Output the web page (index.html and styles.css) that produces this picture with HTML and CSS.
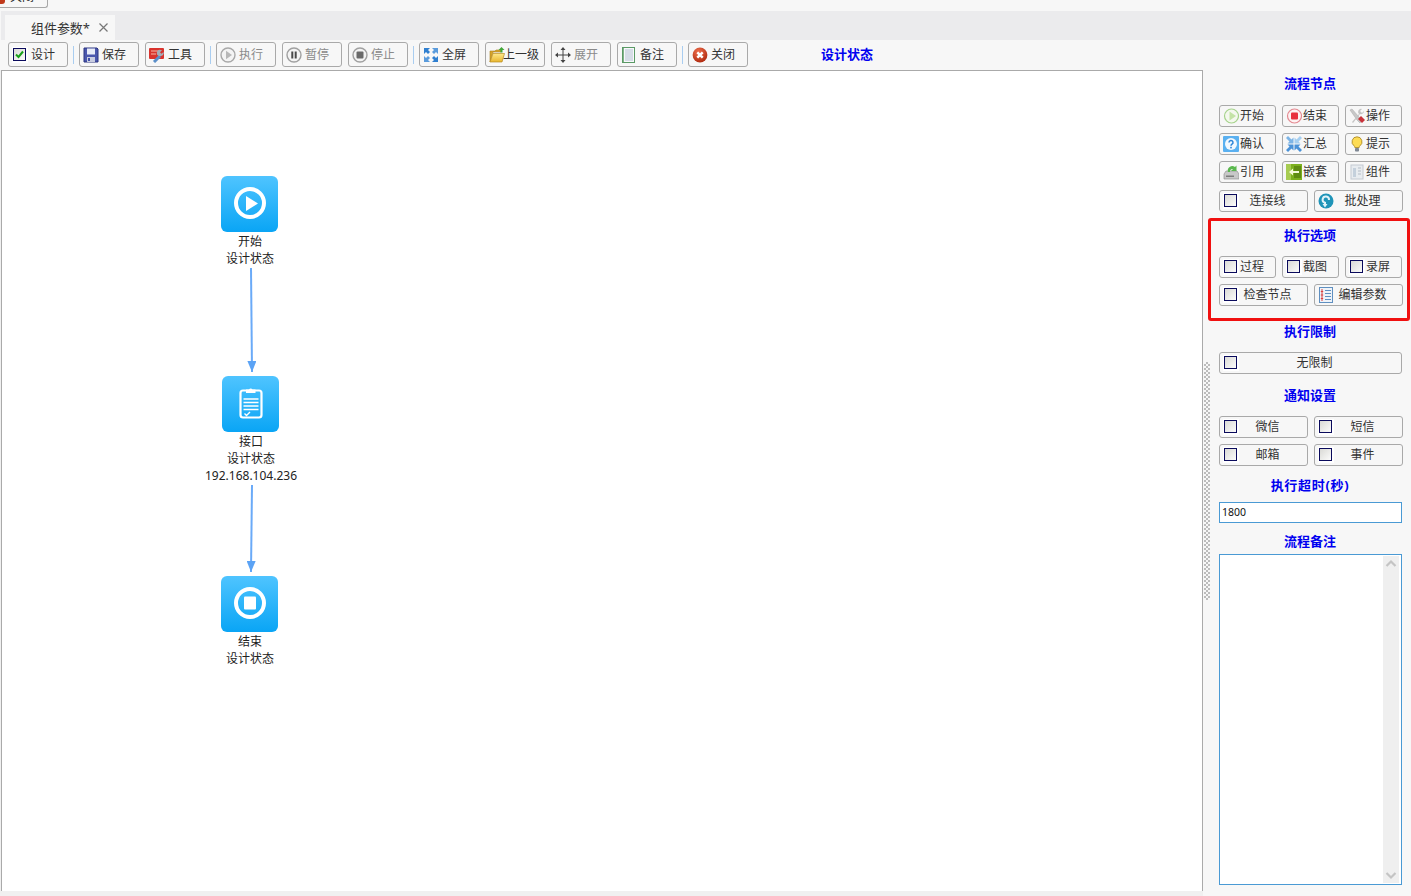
FILE: index.html
```html
<!DOCTYPE html>
<html lang="zh">
<head>
<meta charset="utf-8">
<title>组件参数</title>
<link rel="stylesheet" href="styles.css">
</head>
<body>
<svg class="sprite" aria-hidden="true">
  <defs>
    <linearGradient id="g-box" x1="0" y1="0" x2="1" y2="1"><stop offset="0" stop-color="#d8d8d4"/><stop offset="1" stop-color="#fdfdfd"/></linearGradient>
    <linearGradient id="g-folder" x1="0" y1="0" x2="0" y2="1"><stop offset="0" stop-color="#ffe98a"/><stop offset="1" stop-color="#e8b52e"/></linearGradient>
    <radialGradient id="g-red" cx=".4" cy=".3" r=".8"><stop offset="0" stop-color="#f0714f"/><stop offset="1" stop-color="#a82208"/></radialGradient>
  </defs>
  <symbol id="i-box" viewBox="0 0 16 16"><rect x="0" y="0" width="16" height="16" fill="#fff"/><rect x="1.500" y="1.500" width="12" height="12" fill="url(#g-box)" stroke="#0a0a5c"/></symbol>
  <symbol id="i-check" viewBox="0 0 16 16"><rect x="0" y="0" width="16" height="16" fill="#fff"/><rect x="1.500" y="1.500" width="12" height="12" fill="url(#g-box)" stroke="#0a0a5c"/><path d="M4 7.500l2.500 2.500L11 4.500" fill="none" stroke="#1aa01a" stroke-width="2"/></symbol>
  <symbol id="i-save" viewBox="0 0 16 16"><path d="M1 1h13l1 1v13H1z" fill="#4a57ad" stroke="#2b3480"/><rect x="4" y="1.500" width="8" height="6" fill="#e8ecf8"/><rect x="4" y="10" width="8" height="5" fill="#c9cde0"/><rect x="5" y="11" width="2" height="3" fill="#3f4fa8"/></symbol>
  <symbol id="i-tools" viewBox="0 0 16 16"><rect x="0" y="1" width="15" height="11" rx="1" fill="#d9332d"/><path d="M2 4h9M2 7h5" stroke="#f7b9a8" stroke-width="1.200"/><path d="M5 15l6-6" stroke="#5b8fc9" stroke-width="3"/><path d="M10 9a3 3 0 0 1 2-6l1 .3-2 2 1.500 1.500 2-1.800A3 3 0 0 1 11 9z" fill="#a4aeb8"/></symbol>
  <symbol id="i-play" viewBox="0 0 16 16"><circle cx="8" cy="8" r="7" fill="#f4f4f4" stroke="#a8a8a8" stroke-width="1.400"/><path d="M6 3.800l6 4.200-6 4.200z" fill="#b8b8b8"/></symbol>
  <symbol id="i-pause" viewBox="0 0 16 16"><circle cx="8" cy="8" r="7" fill="#f4f4f4" stroke="#a0a0a0" stroke-width="1.400"/><path d="M5.300 4.500h2v7h-2zM8.700 4.500h2v7h-2z" fill="#4a4a4a"/></symbol>
  <symbol id="i-stop" viewBox="0 0 16 16"><circle cx="8" cy="8" r="7" fill="#f4f4f4" stroke="#a0a0a0" stroke-width="1.400"/><rect x="4.500" y="4.500" width="7" height="7" rx="1" fill="#6a6a6a"/></symbol>
  <symbol id="i-full" viewBox="0 0 16 16"><g fill="#2f7fd0"><path d="M1 1h6L5 3l2 2-2 2-2-2-2 2z"/><path d="M15 1H9l2 2-2 2 2 2 2-2 2 2z" fill="#5a9bdc"/><path d="M1 15h6l-2-2 2-2-2-2-2 2-2-2z" fill="#5a9bdc"/><path d="M15 15H9l2-2-2-2 2-2 2 2 2-2z"/></g></symbol>
  <symbol id="i-folder" viewBox="0 0 16 16"><path d="M1 4h5l1-1h5v2H4L1 15z" fill="#d9a52a" stroke="#a87f1e" stroke-width=".6"/><path d="M4 6.500h11.500L13 15H1z" fill="url(#g-folder)" stroke="#b98d22" stroke-width=".7"/><path d="M12.500 0l3 3h-2v2.500h-2V3h-2z" fill="#43a83a"/></symbol>
  <symbol id="i-move" viewBox="0 0 16 16"><path d="M8 2v12M2 8h12" stroke="#444" stroke-width="1"/><path d="M8 0l2.500 3h-5zM8 16l2.500-3h-5zM0 8l3-2.500v5zM16 8l-3-2.500v5z" fill="#444"/></symbol>
  <symbol id="i-note" viewBox="0 0 16 16"><rect x="1.500" y=".5" width="12" height="15" fill="#f8f9fb" stroke="#5b9a66"/><path d="M2 1v14" stroke="#5b9a66" stroke-width="1.500"/><path d="M4 3h8M4 5h8M4 7h8M4 9h8M4 11h8M4 13h8" stroke="#b4c0d2"/></symbol>
  <symbol id="i-close" viewBox="0 0 16 16"><circle cx="8" cy="8" r="7.400" fill="url(#g-red)"/><path d="M5.300 5.300l5.400 5.400M10.700 5.300l-5.400 5.400" stroke="#fff" stroke-width="2.400"/></symbol>
  <symbol id="i-start" viewBox="0 0 16 16"><circle cx="8.500" cy="8" r="7" fill="#f4f8ee" stroke="#a6d38c" stroke-width="1.200"/><path d="M6.500 3.500l6.500 4.500-6.500 4.500z" fill="#c4e3a6"/></symbol>
  <symbol id="i-end" viewBox="0 0 16 16"><circle cx="8.500" cy="8" r="7" fill="#fdf2f2" stroke="#e48a92" stroke-width="1.200"/><rect x="5" y="4.500" width="7" height="7" rx="1" fill="#e8303c"/></symbol>
  <symbol id="i-op" viewBox="0 0 16 16"><path d="M1 2l2-1 7 8 3 3-2 3-3-3z" fill="#c8c8c8" stroke="#a8a8a8" stroke-width=".5"/><path d="M9 11l3-3 4 4-3 3z" fill="#c8323a"/><path d="M3 14l7-8a3 3 0 0 1 3-5l-2 2 2 2 2-2a3 3 0 0 1-4 3l-7 9z" fill="#c4c4c4"/></symbol>
  <symbol id="i-ask" viewBox="0 0 16 16"><rect x="0" y="0" width="16" height="16" rx="1" fill="#5ab0f0"/><circle cx="8" cy="8" r="6" fill="#f2f8fe"/><path d="M6 6.500a2 2 0 1 1 3 1.700c-.7.500-1 .8-1 1.500" fill="none" stroke="#2f86d8" stroke-width="1.500"/><rect x="7.200" y="10.800" width="1.600" height="1.600" fill="#2f86d8"/></symbol>
  <symbol id="i-sum" viewBox="0 0 16 16"><path d="M7.500 7.500H1.500l2-2L0 2l2-2 3.500 3.500 2-2z" fill="#7cb4e6"/><path d="M8.500 7.500h6l-2-2L16 2l-2-2-3.500 3.500-2-2z" fill="#a4cef0"/><path d="M7.500 8.500H1.500l2 2L0 14l2 2 3.500-3.500 2 2z" fill="#4a92d8"/><path d="M8.500 8.500h6l-2 2L16 14l-2 2-3.500-3.500-2 2z" fill="#4a92d8"/></symbol>
  <symbol id="i-bulb" viewBox="0 0 16 16"><path d="M8 .8a5 5 0 0 1 3 9c-.6.500-.8 1-.8 1.700H5.800c0-.7-.2-1.200-.8-1.700a5 5 0 0 1 3-9z" fill="#fddc55" stroke="#a58220" stroke-width=".8"/><rect x="6" y="12" width="4" height="3.500" rx=".8" fill="#7f8894"/></symbol>
  <symbol id="i-ref" viewBox="0 0 16 16"><path d="M1 10l2-3h11l2 3v5H1z" fill="#c8c8c8" stroke="#888" stroke-width=".6"/><rect x="3" y="11.500" width="8" height="1.500" fill="#7c7c7c"/><path d="M5 8a4.500 4.500 0 0 1 7-5l1.500-1.500V7H8l2-2a2.500 2.500 0 0 0-3 3z" fill="#5ab84e"/></symbol>
  <symbol id="i-nest" viewBox="0 0 16 16"><rect x="0" y="0" width="16" height="16" fill="#7cb01e"/><rect x="0" y="0" width="5" height="16" fill="#a7cc52"/><rect x="8" y="2" width="7" height="12" fill="#5f8c12"/><path d="M3 8l4-3.500V7h6v2H7v2.500z" fill="#f4f8d8"/></symbol>
  <symbol id="i-comp" viewBox="0 0 16 16"><rect x="2" y="1" width="12" height="14" fill="#e8ecf0" stroke="#c4cad2"/><path d="M4 4h3v9H4z" fill="#c4d0dc"/><path d="M9 4h3M9 7h3M9 10h3" stroke="#b4bcc6"/></symbol>
  <symbol id="i-batch" viewBox="0 0 16 16"><circle cx="8" cy="8" r="7.500" fill="#1f94b8"/><path d="M7 12.500V9.800A3.200 3.200 0 1 1 11 7" fill="none" stroke="#dff2f8" stroke-width="2"/><path d="M7 14.500l-2.500-3.500h5z" fill="#dff2f8"/></symbol>
  <symbol id="i-param" viewBox="0 0 16 16"><rect x="1.500" y=".5" width="13" height="15" fill="#eef3f9" stroke="#5f8fc0"/><path d="M7 3.500h6M7 6.500h6M7 9.500h6M7 12.500h6" stroke="#5f8fc0"/><path d="M4 2v12" stroke="#d84040"/><path d="M2.800 4.500h2.400M2.800 8h2.400M2.800 11.500h2.400" stroke="#d84040"/></symbol>
</svg>

<div class="top-strip">
  <div class="stub"><span class="stub-icon"></span><span class="stub-text">关闭</span></div>
</div>

<div class="tab-strip">
  <div class="tab"><span class="tab-title">组件参数*</span><svg class="tab-x" viewBox="0 0 9 9"><path d="M.5 .5l8 8M8.500 .5l-8 8" fill="none" stroke="#777" stroke-width="1.200"/></svg></div>
</div>

<div class="toolbar">
  <button class="tb"><svg class="ic"><use href="#i-check"/></svg><span>设计</span></button>
  <i class="sep"></i>
  <button class="tb"><svg class="ic"><use href="#i-save"/></svg><span>保存</span></button>
  <button class="tb"><svg class="ic"><use href="#i-tools"/></svg><span>工具</span></button>
  <i class="sep"></i>
  <button class="tb off"><svg class="ic"><use href="#i-play"/></svg><span>执行</span></button>
  <button class="tb off"><svg class="ic"><use href="#i-pause"/></svg><span>暂停</span></button>
  <button class="tb off"><svg class="ic"><use href="#i-stop"/></svg><span>停止</span></button>
  <i class="sep"></i>
  <button class="tb"><svg class="ic"><use href="#i-full"/></svg><span>全屏</span></button>
  <button class="tb tight"><svg class="ic"><use href="#i-folder"/></svg><span>上一级</span></button>
  <button class="tb off"><svg class="ic"><use href="#i-move"/></svg><span>展开</span></button>
  <button class="tb"><svg class="ic"><use href="#i-note"/></svg><span>备注</span></button>
  <i class="sep"></i>
  <button class="tb"><svg class="ic"><use href="#i-close"/></svg><span>关闭</span></button>
  <span class="status">设计状态</span>
</div>

<div class="main">
  <div class="canvas">
    <svg class="wires" width="1200" height="820">
      <defs><marker id="arrow" markerWidth="11" markerHeight="9" refX="11" refY="4.500" orient="auto" markerUnits="userSpaceOnUse"><path d="M0 0L11 4.500L0 9z" fill="#5ba3f5"/></marker></defs>
      <path d="M249 197L250 301" class="wire" marker-end="url(#arrow)"/>
      <path d="M250 414L249 501" class="wire" marker-end="url(#arrow)"/>
    </svg>

    <div class="node n-start">
      <div class="node-ic">
        <svg width="57" height="56" viewBox="0 0 57 56"><circle cx="29" cy="27" r="14" fill="none" stroke="#fff" stroke-width="4"/><path d="M25 20l12 7.500-12 7.500z" fill="#fff"/></svg>
      </div>
      <div class="node-t">开始</div>
      <div class="node-t">设计状态</div>
    </div>

    <div class="node n-api">
      <div class="node-ic">
        <svg width="57" height="56" viewBox="0 0 57 56"><rect x="18.500" y="14.500" width="21" height="27" rx="2.500" fill="none" stroke="#fff" stroke-width="2.200"/><path d="M24 17v-3.500h3a2 2 0 0 1 3.500 0h3v3.500z" fill="#fff"/><path d="M21.500 23h15M21.500 26.500h15M21.500 30h15M21.500 33.500h15" stroke="#fff" stroke-width="1.500"/><path d="M22.500 37.500l2 2 3.500-3.500" fill="none" stroke="#fff" stroke-width="1.400"/></svg>
      </div>
      <div class="node-t">接口</div>
      <div class="node-t">设计状态</div>
      <div class="node-t">192.168.104.236</div>
    </div>

    <div class="node n-end">
      <div class="node-ic">
        <svg width="57" height="56" viewBox="0 0 57 56"><circle cx="29" cy="27" r="14" fill="none" stroke="#fff" stroke-width="4"/><rect x="23" y="20.500" width="12" height="13" rx="1" fill="#fff"/></svg>
      </div>
      <div class="node-t">结束</div>
      <div class="node-t">设计状态</div>
    </div>
  </div>

  <aside class="side">
    <div class="grip"></div>
    <div class="panel">
      <h3 class="ttl t1">流程节点</h3>
      <div class="g3">
        <button class="sb"><svg class="ic"><use href="#i-start"/></svg><span>开始</span></button>
        <button class="sb"><svg class="ic"><use href="#i-end"/></svg><span>结束</span></button>
        <button class="sb"><svg class="ic"><use href="#i-op"/></svg><span>操作</span></button>
        <button class="sb"><svg class="ic"><use href="#i-ask"/></svg><span>确认</span></button>
        <button class="sb"><svg class="ic"><use href="#i-sum"/></svg><span>汇总</span></button>
        <button class="sb"><svg class="ic"><use href="#i-bulb"/></svg><span>提示</span></button>
        <button class="sb"><svg class="ic"><use href="#i-ref"/></svg><span>引用</span></button>
        <button class="sb"><svg class="ic"><use href="#i-nest"/></svg><span>嵌套</span></button>
        <button class="sb"><svg class="ic"><use href="#i-comp"/></svg><span>组件</span></button>
      </div>
      <div class="g2 after-nodes">
        <button class="sb wide"><svg class="ic"><use href="#i-box"/></svg><span>连接线</span></button>
        <button class="sb wide"><svg class="ic"><use href="#i-batch"/></svg><span>批处理</span></button>
      </div>

      <h3 class="ttl t2">执行选项</h3>
      <div class="g3">
        <button class="sb"><svg class="ic"><use href="#i-box"/></svg><span>过程</span></button>
        <button class="sb"><svg class="ic"><use href="#i-box"/></svg><span>截图</span></button>
        <button class="sb"><svg class="ic"><use href="#i-box"/></svg><span>录屏</span></button>
      </div>
      <div class="g2 after-g3">
        <button class="sb wide"><svg class="ic"><use href="#i-box"/></svg><span>检查节点</span></button>
        <button class="sb wide"><svg class="ic"><use href="#i-param"/></svg><span>编辑参数</span></button>
      </div>

      <h3 class="ttl t3">执行限制</h3>
      <button class="sb wide one"><svg class="ic"><use href="#i-box"/></svg><span>无限制</span></button>

      <h3 class="ttl t4">通知设置</h3>
      <div class="g2">
        <button class="sb wide"><svg class="ic"><use href="#i-box"/></svg><span>微信</span></button>
        <button class="sb wide"><svg class="ic"><use href="#i-box"/></svg><span>短信</span></button>
        <button class="sb wide"><svg class="ic"><use href="#i-box"/></svg><span>邮箱</span></button>
        <button class="sb wide"><svg class="ic"><use href="#i-box"/></svg><span>事件</span></button>
      </div>

      <h3 class="ttl t5">执行超时(秒)</h3>
      <div class="field">1800</div>

      <h3 class="ttl t6">流程备注</h3>
      <div class="memo">
        <div class="memo-body"></div>
        <div class="bar">
          <svg width="16" height="16" viewBox="0 0 16 16"><path d="M3.500 10L8 5.500 12.500 10" fill="none" stroke="#c4c4c4" stroke-width="2.200"/></svg>
          <svg width="16" height="16" viewBox="0 0 16 16"><path d="M3.500 6L8 10.500 12.500 6" fill="none" stroke="#c4c4c4" stroke-width="2.200"/></svg>
        </div>
      </div>
    </div>
    <div class="mark"></div>
  </aside>
</div>
</body>
</html>
```

FILE: styles.css
```css
* { box-sizing: border-box; }
html, body { margin: 0; padding: 0; }
body {
  width: 1411px;
  height: 896px;
  overflow: hidden;
  background: #f7f7f7;
  color: #333;
  font: 12px/17px "Noto Sans", "Noto Sans CJK SC", sans-serif;
  display: flex;
  flex-direction: column;
}
.sprite { width: 0; height: 0; position: absolute; }

.top-strip { height: 11px; flex: none; }
.stub {
  width: 48px;
  height: 8px;
  background: #f7f7f7;
  border: 1px solid #a8a8a8;
  border-width: 0 1px 1px 0;
  border-radius: 0 0 3px 0;
  overflow: hidden;
  display: flex;
  align-items: flex-start;
  gap: 5px;
}
.stub-icon {
  width: 5px;
  height: 4px;
  background: #c0391b;
  border-radius: 0 0 3px 0;
  flex: none;
}
.stub-text {
  font-size: 12px;
  line-height: 12px;
  height: 3px;
  overflow: hidden;
  display: flex;
  align-items: flex-end;
  color: #222;
}

.tab-strip {
  height: 29px;
  flex: none;
  background: #ebebed;
  margin-left: 1px;
  padding: 4px 0 0 4px;
}
.tab {
  width: 110px;
  height: 25px;
  background: #f7f7f7;
  display: flex;
  align-items: center;
  padding: 2px 0 0 26px;
}
.tab-title { font-size: 13px; color: #333; width: 68px; white-space: nowrap; letter-spacing: -.05px; }
.tab-x { width: 9px; height: 9px; flex: none; margin-top: -3px; }

.toolbar {
  height: 30px;
  flex: none;
  display: flex;
  align-items: flex-start;
  padding: 2px 0 0 8px;
}
.tb {
  width: 60px;
  height: 25px;
  padding: 0 0 0 3px;
  margin: 0;
  background: #f7f7f7;
  border: 1px solid #a9a9a9;
  border-radius: 3px;
  font: inherit;
  color: #333;
  display: flex;
  align-items: center;
  gap: 3px;
  white-space: nowrap;
}
.tb + .tb { margin-left: 6px; }
.tb.off { color: #8a8a8a; }
.tb.tight { gap: 0; }
.tb.tight .ic { margin-right: -2px; }
.ic { width: 16px; height: 16px; flex: none; display: block; }
.sep {
  width: 1px;
  height: 18px;
  margin: 4px 5px 0;
  background: #a9cdf0;
  flex: none;
}
.status {
  margin-left: 73px;
  font-size: 13px;
  font-weight: 700;
  line-height: 25px;
  color: #0000f0;
  white-space: nowrap;
}

.main { flex: 1; min-height: 0; display: flex; padding-bottom: 5px; background: #f0f0f0; }
.canvas {
  width: 1202px;
  margin-left: 1px;
  background: #fff;
  border: 1px solid #aaa;
  border-bottom: 0;
  position: relative;
  flex: none;
}
.wires { position: absolute; left: 0; top: 0; }
.wire { fill: none; stroke: #6aaaf8; stroke-width: 2; }
.node {
  position: absolute;
  width: 120px;
  display: flex;
  flex-direction: column;
  align-items: center;
  color: #222;
}
.n-start { left: 188px; top: 105px; }
.n-api { left: 189px; top: 305px; }
.n-end { left: 188px; top: 505px; }
.node-ic {
  width: 57px;
  height: 56px;
  margin: 0 1px 1px 0;
  border-radius: 6px;
  background: linear-gradient(#4fc4ff, #0aa5f5);
}
.node-ic svg { display: block; }
.node-t { white-space: nowrap; }

.side { flex: 1; display: flex; background: #f7f7f7; position: relative; margin-bottom: -5px; }
.grip {
  width: 6px;
  height: 238px;
  margin: 292px 9px 0 1px;
  flex: none;
  background: repeating-conic-gradient(#bcbcbc 0 25%, transparent 0 50%) 0 0 / 4px 4px;
}
.panel { width: 184px; flex: none; }
.ttl {
  margin: 0;
  font-size: 13px;
  font-weight: 700;
  line-height: 18px;
  color: #0000f0;
  text-align: center;
  padding-right: 2px;
}
.t1 { margin-top: 4px; margin-bottom: 13px; }
.t2 { margin-top: 14px; margin-bottom: 12px; }
.t3 { margin-top: 16px; margin-bottom: 12px; }
.t4 { margin-top: 12px; margin-bottom: 12px; }
.t5 { margin-top: 10px; margin-bottom: 8px; letter-spacing: .7px; }
.t6 { margin-top: 9px; margin-bottom: 4px; }
.g3 { display: grid; grid-template-columns: repeat(3, 57px); gap: 6px; grid-auto-rows: 22px; }
.g2 { display: grid; grid-template-columns: repeat(2, 89px); gap: 6px; grid-auto-rows: 22px; }
.after-g3 { margin-top: 6px; }
.after-nodes { margin-top: 7px; }
.sb {
  height: 22px;
  margin: 0;
  padding: 0 0 0 3px;
  background: #f7f7f7;
  border: 1px solid #a9a9a9;
  border-radius: 3px;
  font: inherit;
  color: #333;
  display: flex;
  align-items: center;
  gap: 1px;
  white-space: nowrap;
}
.sb span { padding-bottom: 2px; }
.wide { padding-right: 11px; gap: 0; }
.wide span { flex: 1; text-align: center; }
.one { width: 183px; }
.field {
  width: 183px;
  height: 21px;
  background: #fff;
  border: 1px solid #4a9ad4;
  font-size: 10.500px;
  line-height: 19px;
  padding-left: 2px;
  color: #111;
}
.memo {
  width: 183px;
  height: 331px;
  background: #fff;
  border: 1px solid #4a9ad4;
  display: flex;
  padding: 1px;
}
.memo-body { flex: 1; }
.bar {
  width: 16px;
  margin-right: 1px;
  background: #efefef;
  display: flex;
  flex-direction: column;
  justify-content: space-between;
}
.bar svg { display: block; }
.mark {
  position: absolute;
  left: 5px;
  top: 148px;
  width: 202px;
  height: 103px;
  border: 3px solid #f01010;
  border-radius: 3px;
  pointer-events: none;
}
```
